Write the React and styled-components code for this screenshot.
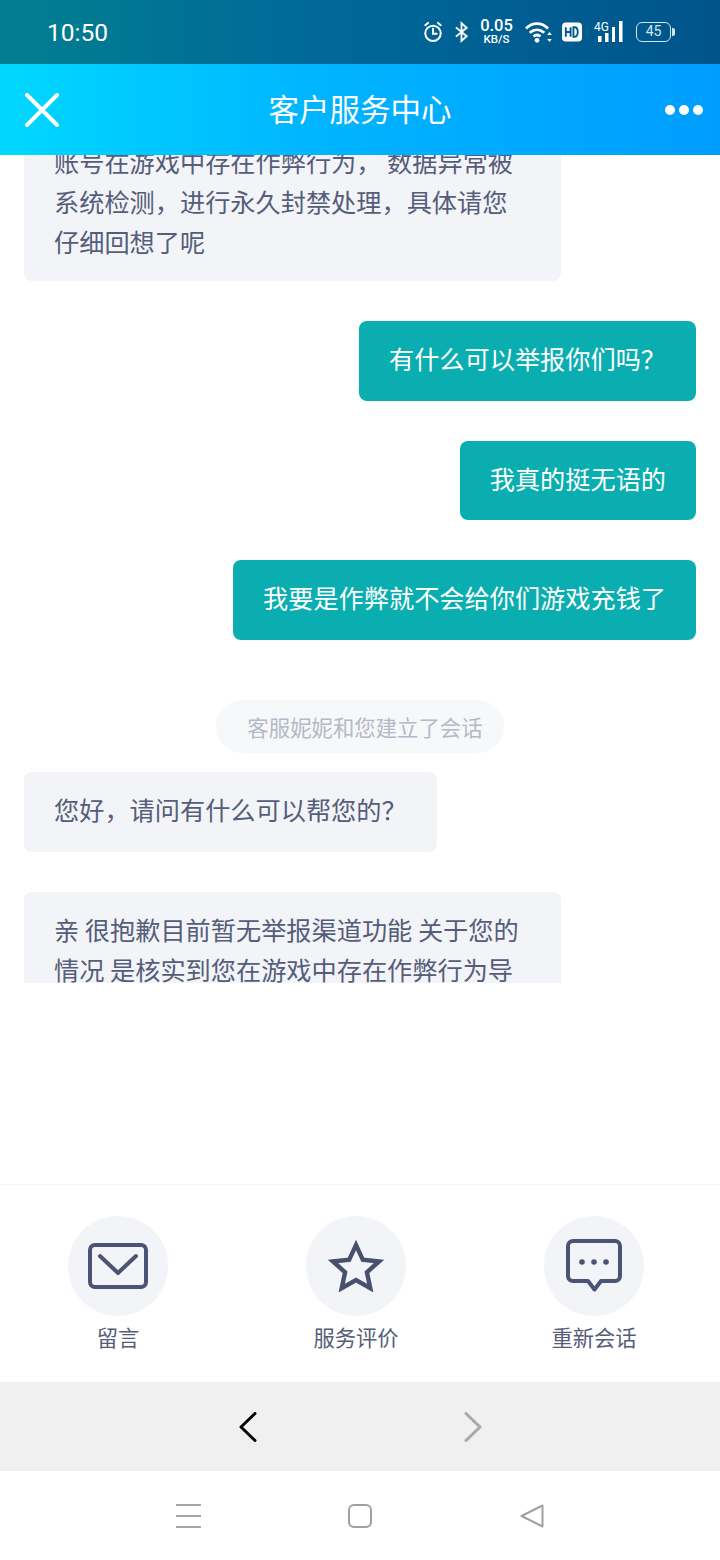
import React from 'react';
import styled, { createGlobalStyle } from 'styled-components';

const GlobalStyle = createGlobalStyle`
    html, body {
        margin: 0;
        padding: 0;
        background: #fff;
    }
    * {
        box-sizing: border-box;
    }
`
const Page = styled.div`
    width: 720px;
    height: 1560px;
    display: flex;
    flex-direction: column;
    overflow: hidden;
    background: #fff;
    font-family: "Noto Sans CJK SC", "Noto Sans", sans-serif;
`
const StatusBar = styled.div`
    height: 64px;
    flex: none;
    display: flex;
    align-items: center;
    justify-content: space-between;
    padding: 0 45px 0 47px;
    background: linear-gradient(90deg, #017f90 0%, #00689a 45%, #00548a 100%);
    color: #fff;
`
const Clock = styled.div`
    font-family: Roboto, sans-serif;
    font-size: 24.5px;
`
const StatusIcons = styled.div`
    display: flex;
    align-items: center;
`
const Speed = styled.div`
    width: 35px;
    margin: 0 11px;
    font-family: Roboto, sans-serif;
    font-weight: 500;
    text-align: center;
    font-size: 16.5px;
    line-height: 14px;
    span {
        display: block;
        font-size: 11.5px;
        line-height: 12px;
    }
`
const Battery = styled.div`
    width: 35px;
    height: 20px;
    margin-left: 12px;
    border: 1.5px solid #d5e6ef;
    border-radius: 6px;
    font-family: Roboto, sans-serif;
    font-size: 14px;
    line-height: 17px;
    text-align: center;
    color: #d5e6ef;
`
const BatteryCap = styled.div`
    width: 3px;
    height: 8px;
    margin-left: 1px;
    border-radius: 0 2px 2px 0;
    background: #d5e6ef;
`
const Header = styled.div`
    height: 91px;
    flex: none;
    display: grid;
    grid-template-columns: 1fr auto 1fr;
    align-items: center;
    padding: 0 17px;
    background: linear-gradient(90deg, #00d8ff 0%, #00b4ff 45%, #009dff 100%);
    color: #fff;
`
const HeaderStart = styled.div`
    display: flex;
    padding-left: 8px;
`
const Title = styled.div`
    font-size: 30.5px;
    line-height: 40px;
    margin-bottom: 4px;
`
const HeaderEnd = styled.div`
    display: flex;
    justify-content: flex-end;
`
const Chat = styled.div`
    height: 1029px;
    flex: none;
`
const Clip = styled.div`
    height: 828px;
    overflow: hidden;
`
const Messages = styled.div`
    display: flex;
    flex-direction: column;
    gap: 40px;
    margin-top: -30.6px;
    padding: 0 24px;
`
const Bubble = styled.div`
    align-self: ${props => (props.$mine ? 'flex-end' : 'flex-start')};
    width: ${props => props.$width || 'auto'};
    padding: 18px 30px ${props => props.$bottom || '22px'};
    border-radius: 8px;
    background: ${props => (props.$mine ? '#0aaeb0' : '#f2f4f7')};
    color: ${props => (props.$mine ? '#fff' : '#555d7b')};
    font-size: 25.2px;
    line-height: 39.6px;
    white-space: nowrap;
`
const Notice = styled.div`
    align-self: center;
    height: 53px;
    margin: 20px 0 -20.5px;
    padding: 0 21px 0 31px;
    border-radius: 27px;
    background: #f7f8fa;
    color: #b4b9c8;
    font-size: 21.4px;
    line-height: 53px;
    white-space: nowrap;
`
const Actions = styled.div`
    height: 198px;
    flex: none;
    display: grid;
    grid-template-columns: repeat(3, 238px);
    padding: 31px 0 0;
    margin-left: -1px;
    border-top: 1px solid #f3f4f6;
`
const Action = styled.div`
    display: flex;
    flex-direction: column;
    align-items: center;
    color: #555d79;
    font-size: 21.3px;
    line-height: 30px;
`
const ActionCircle = styled.div`
    width: 100px;
    height: 100px;
    margin-bottom: 6px;
    border-radius: 50%;
    background: #f2f4f7;
    display: flex;
    align-items: center;
    justify-content: center;
`
const BrowserBar = styled.div`
    height: 89px;
    flex: none;
    display: grid;
    grid-template-columns: 225px 18px;
    align-items: center;
    padding-left: 239px;
    background: #f0f0f0;
`
const NavBar = styled.div`
    height: 89px;
    flex: none;
    display: grid;
    grid-template-columns: 172px 172px 24px;
    align-items: center;
    padding-left: 176px;
    background: #fff;
`

const Alarm = () => (
    <svg width="20" height="22" viewBox="0 0 22 24" fill="none" stroke="#fff" strokeWidth="2.2" strokeLinecap="round">
        <circle cx="11" cy="13.5" r="8.5" />
        <path d="M11 8.5v5.5h4" />
        <path d="M2.5 4.5 5.5 2M19.5 4.5 16.5 2" />
    </svg>
)
const Bluetooth = () => (
    <svg width="13" height="22" viewBox="0 0 14 22" fill="none" stroke="#fff" strokeWidth="2" style={{ marginLeft: 12 }}>
        <path d="M1 6l11.5 9.5L7 20.500V1.500l5.500 5L1 16" />
    </svg>
)
const Wifi = () => (
    <svg width="27" height="22" viewBox="0 0 27 22" fill="none" stroke="#fff" strokeWidth="2.800">
        <path d="M1 7.500c6.500-6.500 15.500-6.500 22 0" />
        <path d="M4.700 11.800c4.500-4 10.100-4 14.600 0" />
        <path d="M8.500 15.500c2.300-2 4.700-2 7 0" />
        <circle cx="12" cy="19.300" r="2.400" fill="#fff" stroke="none" />
        <path d="M24.500 11l-2.300 3h4.600zM24.500 21l-2.300-3h4.600z" fill="#fff" stroke="none" />
    </svg>
)
const HdBadge = () => (
    <svg width="20" height="20" viewBox="0 0 21 20" style={{ marginLeft: 10 }}>
        <rect width="21" height="20" rx="4" fill="#fff" />
        <path d="M4 5v10M9 5v10M4 10h5M12 5v10h1.500c4 0 4-10 0-10z" fill="none" stroke="#00589a" strokeWidth="2" />
    </svg>
)
const SignalText = styled.text`
    font-family: Roboto, sans-serif;
    font-size: 12px;
`
const Signal = () => (
    <svg width="30" height="22" viewBox="0 0 30 22" fill="#fff" style={{ marginLeft: 12 }}>
        <SignalText x="0" y="10">4G</SignalText>
        <rect x="4" y="15" width="3.500" height="6" />
        <rect x="11" y="12" width="3.500" height="9" />
        <rect x="18" y="6" width="3" height="15" />
        <rect x="25" y="0" width="3.500" height="21" />
    </svg>
)
const CloseIcon = () => (
    <svg width="34" height="34" viewBox="0 0 34 34" stroke="#fff" strokeWidth="4" strokeLinecap="round">
        <path d="M2 2l30 30M32 2 2 32" />
    </svg>
)
const MoreIcon = () => (
    <svg width="38" height="12" viewBox="0 0 38 12" fill="#fff">
        <circle cx="5" cy="6" r="5" />
        <circle cx="19" cy="6" r="5" />
        <circle cx="33" cy="6" r="5" />
    </svg>
)
const MailIcon = () => (
    <svg width="60" height="46" viewBox="0 0 60 46" fill="none" stroke="#4b5474" strokeWidth="4" strokeLinecap="round" strokeLinejoin="round">
        <rect x="2" y="2" width="56" height="42" rx="5" />
        <path d="M12 13l18 17 18-17" />
    </svg>
)
const StarIcon = () => (
    <svg width="56" height="52" viewBox="0 0 56 52" fill="none" stroke="#46506f" strokeWidth="4.400">
        <path d="M28 5l6.800 14.800 16.200 1.700-12.100 10.800 3.400 15.900L28 40l-14.300 8.200 3.400-15.900L5 21.500l16.200-1.700z" />
    </svg>
)
const ChatIcon = () => (
    <svg width="56" height="54" viewBox="0 0 56 54" fill="none" stroke="#4b5474" strokeWidth="4" strokeLinejoin="round">
        <path d="M7 2h42a5 5 0 0 1 5 5v30a5 5 0 0 1-5 5H35l-6.500 8.500L22 42H7a5 5 0 0 1-5-5V7a5 5 0 0 1 5-5z" />
        <circle cx="16" cy="23" r="2.800" fill="#4b5474" stroke="none" />
        <circle cx="28" cy="23" r="2.800" fill="#4b5474" stroke="none" />
        <circle cx="40" cy="23" r="2.800" fill="#4b5474" stroke="none" />
    </svg>
)
const Chevron = ({ left, color }) => (
    <svg width="18" height="30" viewBox="0 0 18 30" fill="none" stroke={color} strokeWidth="3" strokeLinecap="round" strokeLinejoin="round">
        <path d={left ? 'M16 1.500 2 15l14 13.500' : 'M2 1.500 16 15 2 28.500'} />
    </svg>
)
const MenuIcon = () => (
    <svg width="25" height="24" viewBox="0 0 25 24" stroke="#a5a5a5" strokeWidth="2">
        <path d="M0 1h25M0 12h25M0 23h25" />
    </svg>
)
const HomeIcon = () => (
    <svg width="24" height="24" viewBox="0 0 24 24" fill="none" stroke="#a0a0a0" strokeWidth="2">
        <rect x="1" y="1" width="22" height="22" rx="5" />
    </svg>
)
const BackIcon = () => (
    <svg width="24" height="24" viewBox="0 0 24 24" fill="none" stroke="#a0a0a0" strokeWidth="2" strokeLinejoin="round">
        <path d="M22.500 1.500v21L1.500 12z" />
    </svg>
)

const App = () => {
    return (
        <Page>
            <GlobalStyle />
            <StatusBar>
                <Clock>10:50</Clock>
                <StatusIcons>
                    <Alarm />
                    <Bluetooth />
                    <Speed>0.05<span>KB/S</span></Speed>
                    <Wifi />
                    <HdBadge />
                    <Signal />
                    <Battery>45</Battery>
                    <BatteryCap />
                </StatusIcons>
            </StatusBar>
            <Header>
                <HeaderStart><CloseIcon /></HeaderStart>
                <Title>客户服务中心</Title>
                <HeaderEnd><MoreIcon /></HeaderEnd>
            </Header>
            <Chat>
                <Clip>
                    <Messages>
                        <Bubble $width="537px" $bottom="20px">
                            账号在游戏中存在作弊行为， 数据异常被<br />
                            系统检测，进行永久封禁处理，具体请您<br />
                            仔细回想了呢
                        </Bubble>
                        <Bubble $mine>有什么可以举报你们吗？</Bubble>
                        <Bubble $mine>我真的挺无语的</Bubble>
                        <Bubble $mine>我要是作弊就不会给你们游戏充钱了</Bubble>
                        <Notice>客服妮妮和您建立了会话</Notice>
                        <Bubble>您好，请问有什么可以帮您的？</Bubble>
                        <Bubble $width="537px" $bottom="60px">
                            亲 很抱歉目前暂无举报渠道功能 关于您的<br />
                            情况 是核实到您在游戏中存在作弊行为导
                        </Bubble>
                    </Messages>
                </Clip>
            </Chat>
            <Actions>
                <Action>
                    <ActionCircle><MailIcon /></ActionCircle>
                    留言
                </Action>
                <Action>
                    <ActionCircle><StarIcon /></ActionCircle>
                    服务评价
                </Action>
                <Action>
                    <ActionCircle><ChatIcon /></ActionCircle>
                    重新会话
                </Action>
            </Actions>
            <BrowserBar>
                <Chevron left color="#000" />
                <Chevron color="#a9a9a9" />
            </BrowserBar>
            <NavBar>
                <MenuIcon />
                <HomeIcon />
                <BackIcon />
            </NavBar>
        </Page>
    );
};

export default App;
